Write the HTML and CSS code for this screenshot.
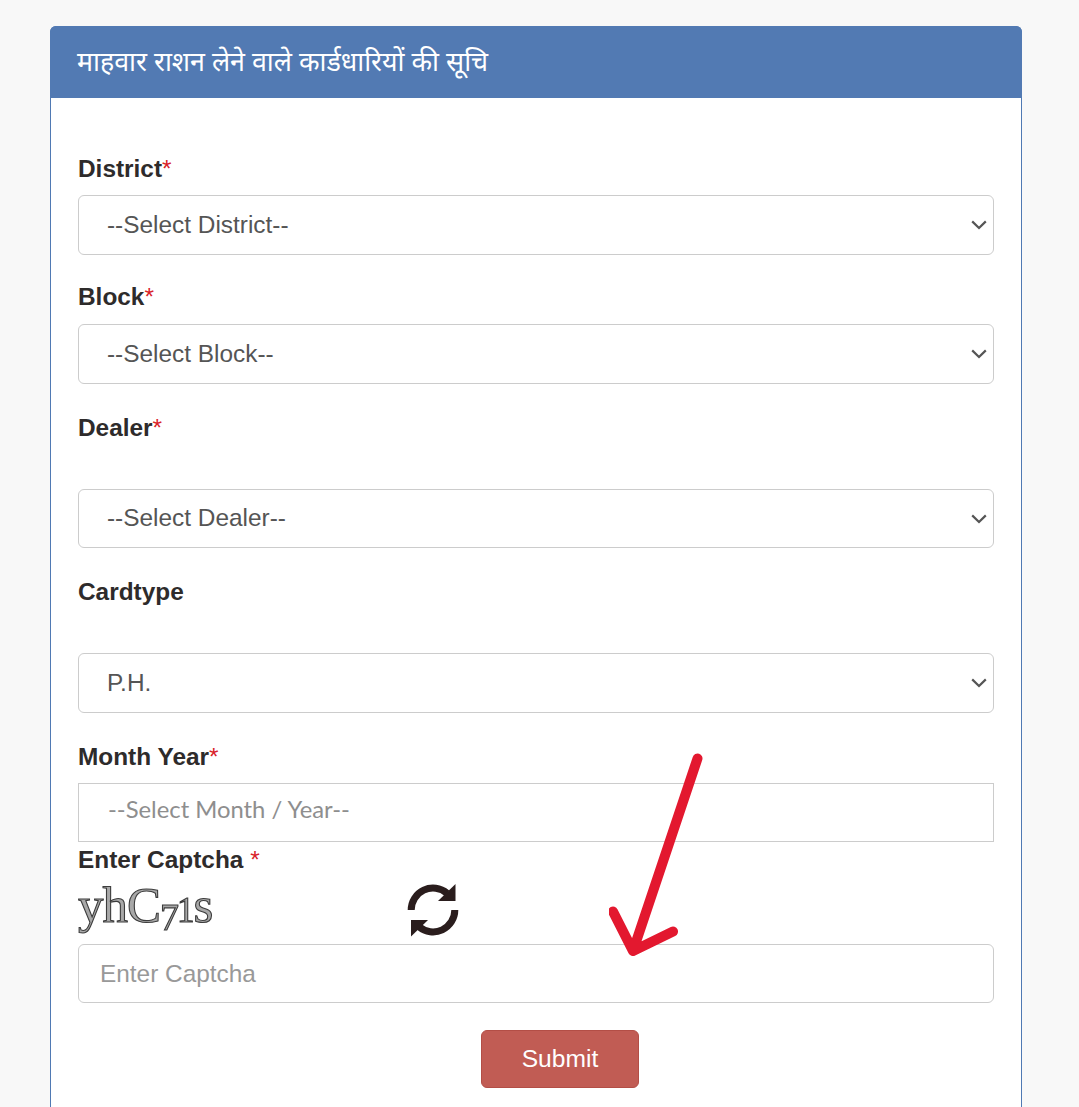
FILE: index.html
```html
<!DOCTYPE html>
<html lang="hi">
<head>
<meta charset="utf-8">
<title>माहवार राशन लेने वाले कार्डधारियों की सूचि</title>
<link rel="stylesheet" href="styles.css">
</head>
<body>
<main class="page">
  <section class="card">
    <h1 class="card-title">माहवार राशन लेने वाले कार्डधारियों की सूचि</h1>
    <form class="card-body">
      <div class="field">
        <label class="label label-first">District<span class="req">*</span></label>
        <div class="select-wrap">
          <select class="control"><option>--Select District--</option></select>
          <svg class="chevron" viewBox="0 0 16 10" aria-hidden="true"><path d="M1.2 1.4 L8 8 L14.8 1.4"/></svg>
        </div>
      </div>
      <div class="field">
        <label class="label label-second">Block<span class="req">*</span></label>
        <div class="select-wrap">
          <select class="control"><option>--Select Block--</option></select>
          <svg class="chevron" viewBox="0 0 16 10" aria-hidden="true"><path d="M1.2 1.4 L8 8 L14.8 1.4"/></svg>
        </div>
      </div>
      <div class="field field-tall">
        <label class="label">Dealer<span class="req">*</span></label>
        <div class="select-wrap">
          <select class="control"><option>--Select Dealer--</option></select>
          <svg class="chevron" viewBox="0 0 16 10" aria-hidden="true"><path d="M1.2 1.4 L8 8 L14.8 1.4"/></svg>
        </div>
      </div>
      <div class="field field-tall">
        <label class="label">Cardtype</label>
        <div class="select-wrap">
          <select class="control"><option>P.H.</option></select>
          <svg class="chevron" viewBox="0 0 16 10" aria-hidden="true"><path d="M1.2 1.4 L8 8 L14.8 1.4"/></svg>
        </div>
      </div>
      <div class="field field-flush">
        <label class="label">Month Year<span class="req">*</span></label>
        <input class="month" type="text" placeholder="--Select Month / Year--">
      </div>
      <div class="field field-captcha">
        <label class="label">Enter Captcha <span class="req">*</span></label>
        <div class="captcha-row">
          <span class="captcha">yhC<span class="old-seven">7</span><span class="old-one">1</span>s</span>
          <svg class="refresh" viewBox="0 0 66 66" aria-hidden="true">
            <path class="refresh-arc" d="M11.2 33 A21.8 21.8 0 0 1 47 16.2"/>
            <path class="refresh-arc" d="M54.8 33 A21.8 21.8 0 0 1 19 49.8"/>
            <path class="refresh-head" d="M55.5 7 V24 H38 Z"/>
            <path class="refresh-head" d="M11 43 H28 L11 59.5 Z"/>
          </svg>
        </div>
        <input class="control captcha-input" type="text" placeholder="Enter Captcha">
      </div>
      <div class="actions">
        <button class="submit" type="button">Submit</button>
      </div>
    </form>
  </section>
  <svg class="arrow" viewBox="0 0 100 210" aria-hidden="true"><path d="M88.5 5.5 L24 198 M4 158.5 L24 198 L64 178.5"/></svg>
</main>
</body>
</html>
```
FILE: styles.css
```css
html, body {
  margin: 0;
  height: 100%;
  overflow: hidden;
  background: #f8f8f8;
}
body {
  font-family: "Liberation Sans", Arial, sans-serif;
  color: #333;
}
.page {
  position: relative;
  box-sizing: border-box;
  height: 100%;
  padding: 26px 57px 0 50px;
}
.card {
  background: #fff;
  border: 1px solid #4f79b3;
  border-bottom: 0;
  border-radius: 6px 6px 0 0;
  min-height: 1200px;
}
.card-title {
  box-sizing: border-box;
  height: 72px;
  margin: -1px -1px 0;
  padding: 0 27px 4px;
  display: flex;
  align-items: center;
  background: #527ab3;
  border-radius: 6px 6px 0 0;
  color: #fff;
  font-family: "Noto Sans", "Liberation Serif", "DejaVu Sans", serif;
  font-size: 26.8px;
  font-weight: 400;
}
.card-body {
  padding: 54px 27px 0;
  display: flex;
  flex-direction: column;
}
.field {
  display: flex;
  flex-direction: column;
  gap: 9.3px;
  margin-bottom: 26px;
}
.field-tall { gap: 45px; }
.field-flush { gap: 10.4px; margin-bottom: 0; }
.label {
  height: 34px;
  line-height: 35px;
  font-size: 24.4px;
  font-weight: 700;
  color: #2e2b2b;
}
.label-first { line-height: 34px; }
.label-second { line-height: 32px; }
.req { color: #d9232a; font-weight: 400; }
.select-wrap {
  position: relative;
  display: flex;
}
.control {
  box-sizing: border-box;
  width: 100%;
  height: 59.5px;
  padding: 0 28px;
  appearance: none;
  background-color: #fff;
  border: 1px solid #ccc;
  border-radius: 6px;
  color: #555;
  font-family: "Liberation Sans", Arial, sans-serif;
  font-size: 24.4px;
  line-height: 1;
}
.chevron {
  position: absolute;
  right: 7px;
  top: 25px;
  width: 16px;
  height: 10px;
  fill: none;
  stroke: #555;
  stroke-width: 2.2;
  pointer-events: none;
}
.month {
  box-sizing: border-box;
  width: 100%;
  height: 59px;
  padding: 0 29px 6px;
  border: 1px solid #ccc;
  border-radius: 0;
  background: #fff;
  font-family: "Lato", sans-serif;
  font-size: 23.8px;
}
.month::placeholder { color: #8e8e8e; opacity: 1; }
.captcha-input { padding: 0 21px; }
.captcha-input::placeholder { color: #999; opacity: 1; }
.field-captcha { gap: 0; margin-bottom: 27px; }
.captcha-row {
  display: flex;
  align-items: center;
  height: 50px;
  margin: 9px 0;
}
.captcha {
  width: 330px;
  padding-top: 3px;
  font-family: "Liberation Serif", serif;
  font-size: 51px;
  line-height: 47px;
  letter-spacing: -1px;
  color: #a8a8a8;
  -webkit-text-stroke: 1.1px #3c3c3c;
  filter: blur(0.6px);
  white-space: nowrap;
}
.old-seven {
  font-size: 38px;
  vertical-align: -8px;
  letter-spacing: -2px;
}
.old-one {
  font-size: 35px;
}
.refresh {
  width: 66px;
  height: 66px;
  margin: -8px 0;
  transform: translateX(-8px);
  overflow: visible;
}
.refresh-arc { fill: none; stroke: #2a1d1d; stroke-width: 7; }
.refresh-head { fill: #2a1d1d; }
.actions {
  display: flex;
  justify-content: center;
  padding-left: 48px;
}
.submit {
  width: 158px;
  height: 58px;
  background: #c15c54;
  border: 1px solid #b34e46;
  border-radius: 6px;
  color: #fff;
  font-family: "Liberation Sans", Arial, sans-serif;
  font-size: 24.6px;
}
.arrow {
  position: absolute;
  left: 609px;
  top: 753px;
  width: 100px;
  height: 210px;
  fill: none;
  stroke: #e3182f;
  stroke-width: 10;
  stroke-linecap: round;
  stroke-linejoin: round;
}
```
